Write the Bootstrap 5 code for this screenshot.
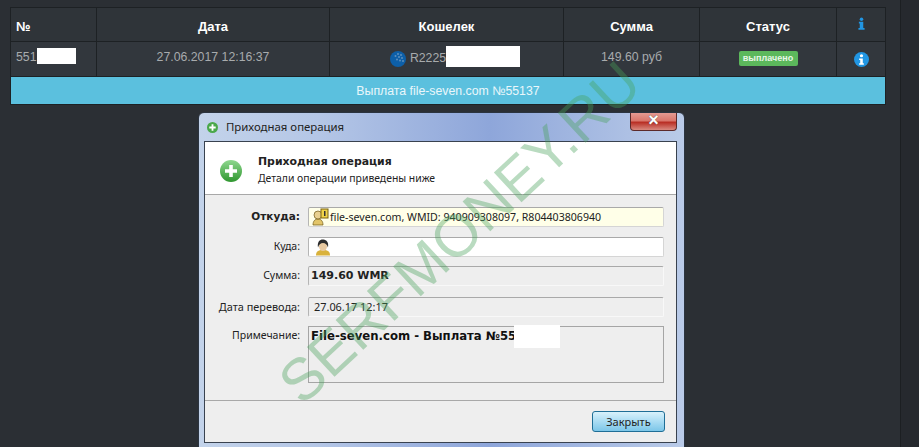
<!DOCTYPE html>
<html lang="ru"><head><meta charset="utf-8"><title>Выплата</title>
<link href="https://cdn.jsdelivr.net/npm/bootstrap@5.3.0/dist/css/bootstrap.min.css" rel="stylesheet">
<style>
html,body{height:447px;overflow:hidden}
body{background:#26292e;font-family:"Liberation Sans",sans-serif;position:relative}
.page-wrap{width:901px;height:447px;border-right:1px solid #1c1f22;background:#2b2f34;padding:7px 0 0 10px}
.pay-table{width:875px;table-layout:fixed;border-collapse:collapse;margin:0;font-size:12.3px;color:#a8abad}
.pay-table th,.pay-table td{border:1px solid #1d2124;text-align:center;padding:0;vertical-align:middle;background:#32373d;color:#a8abad}
.pay-table th{height:34px;color:#fff;background:#2f3439;font-weight:700;font-size:13px;padding-top:4px}
.pay-table td{height:35px;padding-bottom:4px}
.pay-table td.first,.pay-table th.first{text-align:left;padding-left:5px}
.pay-table td.wallet{padding-left:17px}
.pay-table td.banner{height:28px;background:#5bc0de;color:#eaf7fb;padding:0;padding-top:1px}
.mask{display:inline-block;background:#fff}
.mask-a{width:39px;height:16px;vertical-align:-3px}
.mask-b{width:74px;height:21px;vertical-align:-5px}
.paid{display:inline-block;background:#5cb85c;color:#e8f6e8;font-size:9px;font-weight:700;line-height:15px;width:59px;border-radius:2px;position:relative;top:0}
.win{width:487px;height:340px;margin:7px 0 0 188px;border-radius:6px 6px 0 0;border:1px solid #2b3440;background:linear-gradient(90deg,#c3d3ea 0,#b4c6e6 25%,#8ea6da 60%,#bacbe8 100%);padding:0 7px 0 5px;font-family:"Noto Sans",sans-serif;font-size:10.5px;color:#222;position:relative}
.win-title{height:28px;font-size:11.4px;color:#222;gap:8px;padding:0 0 0 3px}
.win-close{position:absolute;top:0;right:7px;width:47px;height:18px;border-radius:0 0 4px 4px;border:1px solid #5c2a2a;border-top:0;background:linear-gradient(#e49a92 0,#d9776c 45%,#b92f25 55%,#d98a80 100%);color:#fff;font-weight:700;font-size:18px;line-height:15px;text-align:center;font-family:"Liberation Sans",sans-serif;text-shadow:0 0 1px #333}
.win-body{height:302px;border:1px solid #39424f;background:#eeeeee;display:flex;flex-direction:column}
.win-head{height:53px;flex:none;background:#fff;border-bottom:1px solid #a8a8a8;padding:5px 0 0 15px;gap:16px}
.win-head b{font-family:"DejaVu Sans",sans-serif;font-size:10.9px;display:block;line-height:15px}
.win-head span{display:block;line-height:19px;font-size:10.4px}
.win-form{flex:1;padding:12px 12px 0 0}
.form-line{height:20px;margin-bottom:10px}
.form-line.tight{margin-bottom:9px}
.form-line.wide{margin-bottom:11px}
.form-line label{width:95px;text-align:right;margin-right:8px;flex:none}
.form-line label.strong{font-family:"DejaVu Sans",sans-serif;font-weight:700;font-size:10.5px}
.form-line label.datelbl{font-size:10.9px}
.fld{flex:1;height:20px;border:1px solid #d5d5d5;border-top-color:#a9a9a9;border-left-color:#b5b5b5;border-radius:2px;background:#fff;line-height:18px;padding-left:3px;white-space:nowrap;gap:1px}
.fld.yel{background:#ffffe8;font-size:10.6px}
.fld.plain{background:#eeeeee;border-right-color:#f8f8f8;border-bottom-color:#f8f8f8}
.fld.datefld{padding-left:5px;font-size:10.9px}
.val-b{font-family:"DejaVu Sans",sans-serif;font-weight:700;font-size:11px;padding-left:2px}
.note-line{height:57px;margin:0}
.note-box{flex:1;height:57px;border:1px solid #a5a5a5;background:#eeeeee;font-family:"DejaVu Sans",sans-serif;font-weight:700;font-size:11.7px;padding:0 0 0 2px;line-height:18px;position:relative;color:#111}
.note-mask{position:absolute;left:205px;top:-2px;width:46px;height:23px;background:#fff}
.note-label{align-self:flex-start;padding-top:2px}
.win-foot{height:42px;flex:none;border-top:1px solid #a8a8a8;padding-right:11px}
.close-btn{width:73px;height:21px;padding:0;border:1px solid #1f6e96;border-radius:3px;background:linear-gradient(#d8f1fb,#a9dcf3 50%,#7cc6e8);color:#222;font-family:"Noto Sans",sans-serif;font-size:11px;line-height:19px}
.watermark{position:absolute;left:460px;top:233px;transform:translate(-50%,-50%) rotate(-43deg);font-family:"Liberation Sans",sans-serif;font-size:59px;line-height:1;white-space:nowrap;color:rgba(70,160,90,.38);pointer-events:none}
</style></head>
<body>
<div class="page-wrap">
<table class="table pay-table">
<colgroup><col style="width:86px"><col style="width:233px"><col style="width:234px"><col style="width:136px"><col style="width:137px"><col style="width:49px"></colgroup>
<thead><tr><th class="first">№</th><th>Дата</th><th>Кошелек</th><th>Сумма</th><th>Статус</th>
<th><svg width="7" height="13" viewBox="0 0 8 14" style="margin-top:-6px;display:block;margin-left:auto;margin-right:auto"><circle cx="4" cy="2" r="2" fill="#2196e3"/><path fill="#2196e3" d="M1 5h5v7h1.500v2H.5v-2H2V7H1z"/></svg></th></tr></thead>
<tbody><tr>
<td class="first">551<span class="mask mask-a"></span></td>
<td>27.06.2017 12:16:37</td>
<td class="wallet"><svg width="16" height="16" viewBox="0 0 16 16" class="me-1" style="vertical-align:-5px"><circle cx="8" cy="8" r="8" fill="#0d5fa8"/><g fill="#5d8fbd"><circle cx="8" cy="3" r="1"/><circle cx="11" cy="4" r="1"/><circle cx="5.500" cy="5" r="1"/><circle cx="9" cy="6" r="1"/><circle cx="12" cy="7" r="1"/><circle cx="7" cy="8.500" r="1"/><circle cx="10" cy="9.500" r="1"/><circle cx="13" cy="10" r="1"/></g></svg>R2225<span class="mask mask-b"></span></td>
<td>149.60 руб</td>
<td><span class="paid">выплачено</span></td>
<td><svg width="15" height="15" viewBox="0 0 14 14" style="display:block;margin:5px auto 0"><circle cx="7" cy="7" r="7" fill="#2196e3"/><circle cx="7" cy="3.500" r="1.500" fill="#fff"/><path fill="#fff" d="M4.800 6h3.400v4.500h1V12H4.800v-1.500h1V7.500h-1z"/></svg></td>
</tr>
<tr><td colspan="6" class="banner">Выплата file-seven.com №55137</td></tr></tbody>
</table>

<div class="win">
<div class="win-title d-flex align-items-center">
<svg width="11" height="11" viewBox="0 0 12 12"><circle cx="6" cy="6" r="6" fill="#4aa84a"/><path fill="#fff" d="M5 2.500h2V5h2.500v2H7v2.500H5V7H2.500V5H5z"/></svg>
<span>Приходная операция</span></div>
<div class="win-close">×</div>
<div class="win-body">
<div class="win-head d-flex align-items-center">
<svg width="22" height="22" viewBox="0 0 22 22"><defs><linearGradient id="g1" x1="0" y1="0" x2="0" y2="1"><stop offset="0" stop-color="#8fd88f"/><stop offset="1" stop-color="#2f962f"/></linearGradient></defs><circle cx="11" cy="11" r="11" fill="url(#g1)"/><path fill="#fff" d="M9.200 5h3.600v4.200H17v3.600h-4.200V17H9.200v-4.200H5V9.200h4.200z"/></svg>
<div><b>Приходная операция</b><span>Детали операции приведены ниже</span></div>
</div>
<div class="win-form">
<div class="form-line d-flex align-items-center"><label class="strong">Откуда:</label>
<div class="fld yel d-flex align-items-center"><svg width="17" height="18" viewBox="0 0 17 18"><path fill="#e3c568" stroke="#6d5614" stroke-width=".7" d="M1 17c0-4 2-6 5-6s5 2 5 6z"/><circle cx="6" cy="7" r="4" fill="#e8d090" stroke="#6d5614" stroke-width=".7"/><rect x="9" y="1" width="7" height="9" fill="#f0d34a" stroke="#7a6213"/><rect x="12" y="3" width="1.500" height="5" fill="#333"/></svg><span>file-seven.com, WMID: 940909308097, R804403806940</span></div></div>
<div class="form-line tight d-flex align-items-center"><label>Куда:</label>
<div class="fld d-flex align-items-center"><svg width="14" height="17" viewBox="0 0 14 17" class="ms-1"><path fill="#d9b23c" d="M0 16.500c0-4 2-5.500 7-5.500s7 1.500 7 5.500z"/><ellipse cx="7" cy="7.500" rx="4" ry="4.500" fill="#e8c9a0"/><path fill="#2c2c2c" d="M2 8.500C1 2 4.500 0 7.500 .5S13 3 12 8.500c-1-3-2.500-4.500-5-4.500S3 5.500 2 8.500z"/></svg></div></div>
<div class="form-line wide d-flex align-items-center"><label>Сумма:</label>
<div class="fld plain val-b">149.60 WMR</div></div>
<div class="form-line tight d-flex align-items-center"><label class="datelbl">Дата перевода:</label>
<div class="fld plain datefld">27.06.17 12:17</div></div>
<div class="form-line note-line d-flex"><label class="note-label">Примечание:</label>
<div class="note-box">File-seven.com - Выплата №55<span class="note-mask"></span></div></div>
</div>
<div class="win-foot d-flex align-items-center justify-content-end"><button type="button" class="btn close-btn">Закрыть</button></div>
</div>
</div>
</div>
<div class="watermark">SERFMONEY.RU</div>
</body></html>
